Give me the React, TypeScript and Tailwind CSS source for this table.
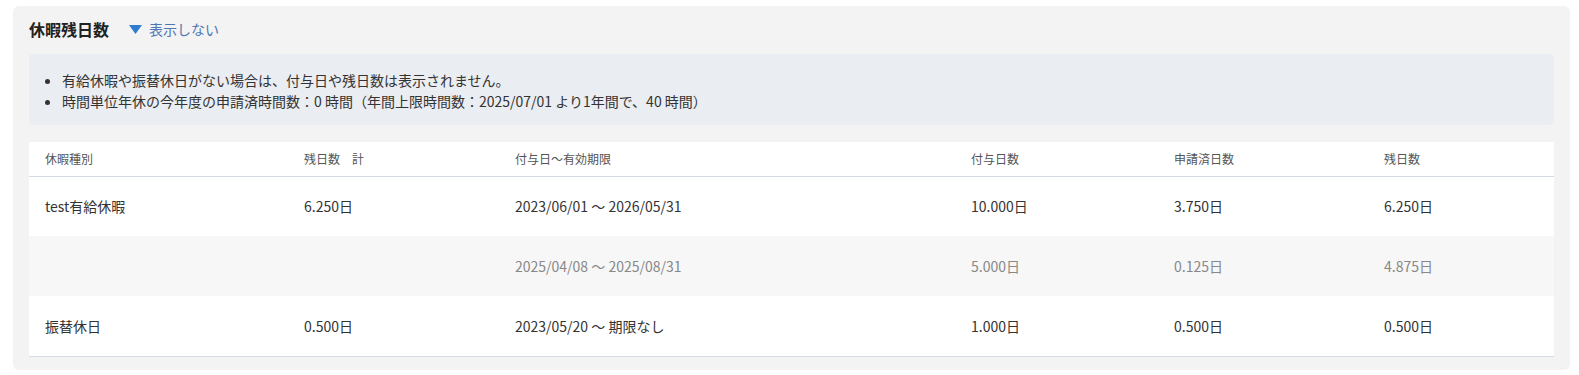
import React from 'react';

type Row = {
  kind: string;
  total: string;
  period: string;
  granted: string;
  applied: string;
  remain: string;
  sub?: boolean;
};

const rows: Row[] = [
  { kind: 'test有給休暇', total: '6.250日', period: '2023/06/01 〜 2026/05/31', granted: '10.000日', applied: '3.750日', remain: '6.250日' },
  { kind: '', total: '', period: '2025/04/08 〜 2025/08/31', granted: '5.000日', applied: '0.125日', remain: '4.875日', sub: true },
  { kind: '振替休日', total: '0.500日', period: '2023/05/20 〜 期限なし', granted: '1.000日', applied: '0.500日', remain: '0.500日' },
];

const headers = ['休暇種別', '残日数　計', '付与日〜有効期限', '付与日数', '申請済日数', '残日数'];
const widths = ['w-[259px]', 'w-[211px]', 'w-[456px]', 'w-[203px]', 'w-[210px]', 'w-[186px]'];

export default function App() {
  return (
    <div className="w-[1579px] h-[375px] bg-white pt-[6px] font-['Noto_Sans_CJK_JP',sans-serif] text-[#333]">
      <div className="ml-[13px] w-[1557px] rounded-md bg-[#f3f3f3] px-4 pt-[11px] pb-[13px]">
        {/* Title + toggle */}
        <div className="flex items-center h-6 mb-[13px]">
          <h2 className="text-base font-bold leading-6 text-[#222]">休暇残日数</h2>
          <button className="ml-[20px] flex items-center gap-[7px] text-sm text-[#4e76b4]">
            <svg width="13" height="9" viewBox="0 0 13 9">
              <polygon points="0,0 13,0 6.5,9" fill="#2e7bcf" />
            </svg>
            表示しない
          </button>
        </div>

        {/* Notes */}
        <div className="rounded bg-[#eaedf1] pt-4 pb-[13px] pl-[33px]">
          <ul className="list-disc text-sm leading-[21px] text-[#333]">
            <li>有給休暇や振替休日がない場合は、付与日や残日数は表示されません。</li>
            <li>時間単位年休の今年度の申請済時間数：0 時間（年間上限時間数：2025/07/01 より1年間で、40 時間）</li>
          </ul>
        </div>

        {/* Table */}
        <table className="mt-[17px] w-full table-fixed border-collapse bg-white">
          <colgroup>
            {widths.map((w, i) => (
              <col key={i} className={w} />
            ))}
          </colgroup>
          <thead>
            <tr className="h-[34px] border-b border-[#d5dbe3]">
              {headers.map((h) => (
                <th key={h} className="px-4 text-left text-xs font-normal text-[#555] whitespace-pre">
                  {h}
                </th>
              ))}
            </tr>
          </thead>
          <tbody>
            {rows.map((r, i) => (
              <tr
                key={i}
                className={`h-[60px] text-sm ${r.sub ? 'bg-[#f7f7f7] text-[#888]' : 'bg-white text-[#333]'} ${
                  i === rows.length - 1 ? 'border-b border-[#d5dbe3]' : ''
                }`}
              >
                <td className="px-4">{r.kind}</td>
                <td className="px-4">{r.total}</td>
                <td className="px-4">{r.period}</td>
                <td className="px-4">{r.granted}</td>
                <td className="px-4">{r.applied}</td>
                <td className="px-4">{r.remain}</td>
              </tr>
            ))}
          </tbody>
        </table>
      </div>
    </div>
  );
}
